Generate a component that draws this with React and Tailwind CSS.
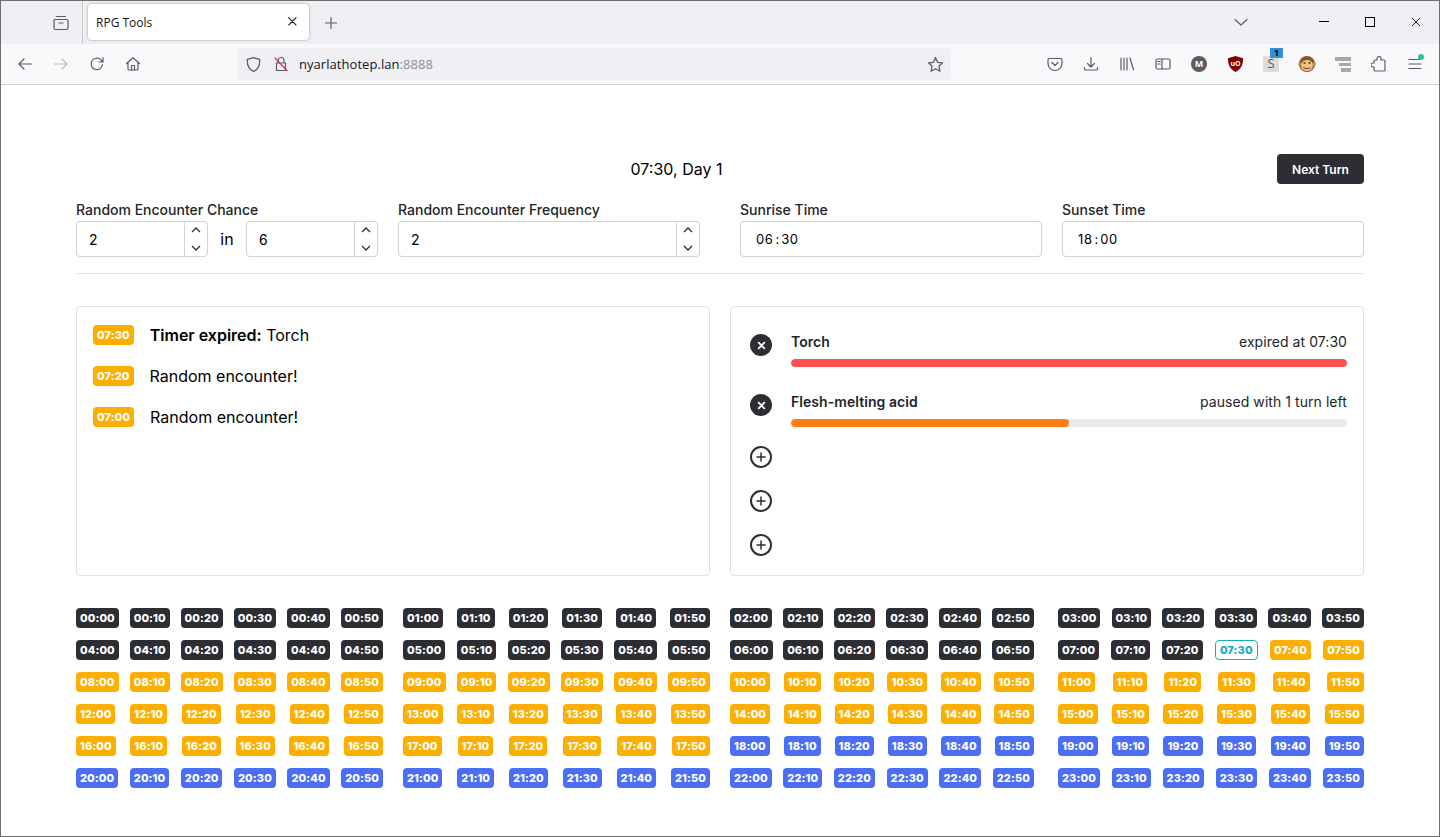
import React from 'react';

const pad = (n) => String(n).padStart(2, '0');

const MINUTES = [0, 10, 20, 30, 40, 50];

function slotType(hour, minute) {
  const t = hour * 60 + minute;
  if (t < 450) return 'past';
  if (t === 450) return 'now';
  if (t < 1080) return 'day';
  return 'night';
}

const badgeStyles = {
  past: 'bg-[#2c2e33] text-white',
  now: 'bg-white text-[#15aabf] border border-[#15aabf]',
  day: 'bg-[#fcaf00] text-white',
  night: 'bg-[#4c6ef5] text-white',
};

function Badge({ type, children }) {
  return (
    <span className={`inline-flex h-5 items-center justify-center rounded px-1 text-[11px] font-extrabold leading-none tracking-[0.1px] ${badgeStyles[type]}`}>
      {children}
    </span>
  );
}

function HourBlock({ hours, className }) {
  return (
    <div className={`flex flex-col gap-3 ${className}`}>
      {hours.map((h) => (
        <div key={h} className="flex justify-between">
          {MINUTES.map((m) => (
            <Badge key={m} type={slotType(h, m)}>{pad(h)}:{pad(m)}</Badge>
          ))}
        </div>
      ))}
    </div>
  );
}

function Ico({ size = 16, className = '', children, fill = 'none' }) {
  return (
    <svg width={size} height={size} viewBox="0 0 16 16" fill={fill} stroke="currentColor" strokeWidth="1.2" strokeLinecap="round" strokeLinejoin="round" className={className}>
      {children}
    </svg>
  );
}

function ToolBtn({ children, className = '' }) {
  return <div className={`flex h-4 w-9 shrink-0 items-center justify-center text-[#5b5b66] ${className}`}>{children}</div>;
}

function BrowserChrome() {
  return (
    <div className="shrink-0 font-['Open_Sans',sans-serif]">
      <div className="flex h-[43px] bg-[#f0f0f4]">
        <div className="flex w-[82px] items-center justify-end border-r border-[#c9c9cf] pr-[13px] text-[#5b5b66]">
          <Ico>
            <path d="M3.500 1.500h9M1 5.500a1 1 0 0 1 1-1h12a1 1 0 0 1 1 1v7.500a1.500 1.500 0 0 1-1.500 1.500h-11A1.500 1.500 0 0 1 1 13z" />
            <path d="M6 8h4" />
          </Ico>
        </div>
        <div className="ml-[5px] mt-[3px] flex h-9 w-[221px] items-center justify-between rounded bg-white pl-2 pr-[9px] shadow-[0_0_3px_rgba(0,0,0,0.35)]">
          <span className="pt-px text-[12px] text-[#15141a]">RPG Tools</span>
          <Ico size={14} className="text-[#15141a]"><path d="M3 3l8.500 8.500M11.500 3L3 11.500" /></Ico>
        </div>
        <div className="ml-[14px] flex items-center text-[#5b5b66]">
          <Ico size={16}><path d="M8 2.500v11M2.500 8h11" /></Ico>
        </div>
        <div className="flex flex-1 items-center justify-end">
          <Ico size={16} className="mr-[70px] -mt-[2px] text-[#5b5b66]"><path d="M2 5.500l6 5.500 6-5.500" /></Ico>
          <div className="mr-[36px] -mt-[2px] h-px w-[10px] bg-black" />
          <div className="mr-[35px] -mt-[2px] h-[10px] w-[10px] border border-black" />
          <Ico size={12} className="mr-[17px] -mt-[2px] text-black"><path d="M3 3l10 10M13 3L3 13" /></Ico>
        </div>
      </div>

      <div className="flex h-[41px] items-center border-b border-[#cfcfd8] bg-[#f9f9fb]">
        <ToolBtn className="ml-[6px]"><Ico><path d="M14.500 8H2M7 3L2 8l5 5" /></Ico></ToolBtn>
        <ToolBtn className="text-[#b8b8c0]"><Ico><path d="M1.500 8H14M9 3l5 5-5 5" /></Ico></ToolBtn>
        <ToolBtn><Ico><path d="M13.500 8.500A5.700 5.700 0 1 1 11.600 3.600L14 6M14 1.500V6H9.800" /></Ico></ToolBtn>
        <ToolBtn><Ico><path d="M1.500 7.500L8 1.800l6.500 5.700M3 6.500V13a1 1 0 0 0 1 1h8a1 1 0 0 0 1-1V6.500" /><path d="M6.500 14V9.500h3V14" /></Ico></ToolBtn>
        <div className="ml-[86px] flex h-8 w-[714px] items-center rounded bg-[#f0f0f4] text-[#5b5b66]">
          <Ico size={17} className="ml-2"><path d="M8 1.500l5.800 1.700c.3 5.500-1.500 9.500-5.800 11.300C3.700 12.700 1.900 8.700 2.200 3.200z" /></Ico>
          <div className="ml-[11px] w-[18px]">
            <Ico>
              <path d="M5 7V4.500a3 3 0 0 1 6 0V7M3.500 7h9v7.500h-9z" />
              <path d="M2 2l12 12.500" stroke="#e22850" />
            </Ico>
          </div>
          <span className="ml-[8px] pt-px text-[13px] tracking-[0.05px] text-[#15141a]">nyarlathotep.lan<span className="text-[#8f8f9d]">:8888</span></span>
          <Ico size={17} className="ml-auto mr-[7px]"><path d="M8 1.500l2 4.400 4.700.5-3.500 3.200 1 4.700L8 12l-4.200 2.300 1-4.700L1.300 6.400 6 5.900z" /></Ico>
        </div>
        <div className="ml-[86px] flex items-center">
          <ToolBtn><Ico><path d="M2.500 2.500h11A1.500 1.500 0 0 1 15 4v3.500a7 7 0 0 1-14 0V4a1.500 1.500 0 0 1 1.500-1.500z" /><path d="M5 6.500l3 3 3-3" /></Ico></ToolBtn>
          <ToolBtn><Ico><path d="M8 1.500v9M4.500 7.500L8 11l3.500-3.500M1.500 11.500v1.500a1 1 0 0 0 1 1h11a1 1 0 0 0 1-1v-1.500" /></Ico></ToolBtn>
          <ToolBtn><Ico><path d="M2 2v12M5 2v12M8 2v12M11 2l3.500 12" /></Ico></ToolBtn>
          <ToolBtn><Ico><rect x="1" y="3" width="14" height="10" rx="1.500" /><path d="M7 3v10M2.800 5.500h2.400M2.800 8h2.400" /></Ico></ToolBtn>
          <ToolBtn>
            <span className="flex h-4 w-4 items-center justify-center rounded-full bg-[#5b5b66] text-[9px] font-bold text-white">M</span>
          </ToolBtn>
          <ToolBtn>
            <svg width="15" height="16" viewBox="0 0 15 16">
              <path d="M7.500 0L15 2.200c.2 6.500-2 11-7.500 13.800C2 13.200-.2 8.700 0 2.200z" fill="#800000" />
              <text x="7.500" y="10" textAnchor="middle" fontSize="7" fontWeight="700" fill="#fff">uO</text>
            </svg>
          </ToolBtn>
          <ToolBtn>
            <div className="relative flex h-4 w-4 items-center justify-center bg-[#dcdcdc] text-[13px] text-[#5b5b5b]">
              S
              <span className="absolute -right-1 -top-2 flex h-[10px] w-[13px] items-center justify-center rounded-[1px] bg-[#2f8fd8] text-[9px] font-bold text-black">1</span>
            </div>
          </ToolBtn>
          <ToolBtn>
            <svg width="18" height="18" viewBox="0 0 18 18">
              <circle cx="9" cy="9" r="8" fill="#8a5a22" />
              <circle cx="1.800" cy="9" r="1.800" fill="#c48a4a" />
              <circle cx="16.200" cy="9" r="1.800" fill="#c48a4a" />
              <ellipse cx="9" cy="10.500" rx="6" ry="5.500" fill="#eec28a" />
              <circle cx="6.500" cy="8" r="1.100" fill="#2f5d2a" />
              <circle cx="11.500" cy="8" r="1.100" fill="#2f5d2a" />
              <path d="M5.500 12.500c2 1.500 5 1.500 7 0" stroke="#8a2a1a" fill="none" />
            </svg>
          </ToolBtn>
          <ToolBtn>
            <div className="flex w-4 flex-col items-end gap-[2px]">
              <div className="h-[4px] w-4 bg-[#a8a8a8]" />
              <div className="h-[3px] w-3 bg-[#a8a8a8]" />
              <div className="h-[4px] w-[10px] bg-[#a8a8a8]" />
            </div>
          </ToolBtn>
          <ToolBtn><Ico><path d="M6 2.500a2 2 0 0 1 4 0V4h3a1 1 0 0 1 1 1v9a1 1 0 0 1-1 1H4a1 1 0 0 1-1-1v-3H2a2 2 0 0 1 0-4h1V5a1 1 0 0 1 1-1h2z" /></Ico></ToolBtn>
          <ToolBtn className="relative">
            <Ico><path d="M2 3.500h12M2 8h12M2 12.500h12" /></Ico>
            <span className="absolute right-[9px] -top-[2px] h-[6px] w-[6px] rounded-full bg-[#2ac3a2]" />
          </ToolBtn>
        </div>
      </div>
    </div>
  );
}

function Stepper({ value, className }) {
  return (
    <div className={`flex h-9 items-center rounded border border-[#ced4da] ${className}`}>
      <span className="flex-1 pl-3 pt-px text-[14px] text-black">{value}</span>
      <div className="flex h-full w-[23px] flex-col items-center justify-between border-l border-[#ced4da] py-[5px] text-[#2c2e33]">
        <svg width="10" height="6" viewBox="0 0 10 6" fill="none" stroke="currentColor" strokeWidth="1.300"><path d="M1 5l4-4 4 4" /></svg>
        <svg width="10" height="6" viewBox="0 0 10 6" fill="none" stroke="currentColor" strokeWidth="1.300"><path d="M1 1l4 4 4-4" /></svg>
      </div>
    </div>
  );
}

function Field({ label, children }) {
  return (
    <div className="w-[302px]">
      <div className="mb-px text-[14px] font-medium leading-[20px] text-[#212529]">{label}</div>
      {children}
    </div>
  );
}

function TimeInput({ h, m }) {
  return (
    <div className="flex h-9 items-center rounded border border-[#ced4da] pl-[15px] pt-[2px] text-[13px] text-black">
      <span className="tracking-[0.6px]">{h}</span>
      <span className="mx-[2px]">:</span>
      <span className="tracking-[0.6px]">{m}</span>
    </div>
  );
}

function LogRow({ time, children }) {
  return (
    <div className="flex h-5 items-center gap-4">
      <Badge type="day">{time}</Badge>
      <span className="text-[16px] text-black">{children}</span>
    </div>
  );
}

function TimerRow({ name, status, barClass, pct }) {
  return (
    <div className="flex gap-[19px]">
      <button className="flex h-[22px] w-[22px] shrink-0 items-center justify-center rounded-full bg-[#2c2e33] text-white">
        <svg width="9" height="9" viewBox="0 0 8 8" fill="none" stroke="currentColor" strokeWidth="1.600" strokeLinecap="round"><path d="M1.500 1.500l5 5M6.500 1.500l-5 5" /></svg>
      </button>
      <div className="flex h-[33px] flex-1 flex-col justify-between">
        <div className="flex justify-between text-[14px] leading-4 tracking-[0.06px]">
          <span className="font-semibold text-[#212529]">{name}</span>
          <span className="text-[#212529]">{status}</span>
        </div>
        <div className="h-2 overflow-hidden rounded-full bg-[#e9ecef]">
          <div className={`h-full rounded-full ${barClass}`} style={{ width: `${pct}%` }} />
        </div>
      </div>
    </div>
  );
}

function AddButton() {
  return (
    <button className="flex h-[22px] w-[22px] items-center justify-center rounded-full border-2 border-[#2c2e33] text-[#2c2e33]">
      <svg width="10" height="10" viewBox="0 0 10 10" fill="none" stroke="currentColor" strokeWidth="1.500" strokeLinecap="round"><path d="M5 1v8M1 5h8" /></svg>
    </button>
  );
}

export default function App() {
  return (
    <div className="flex h-[837px] flex-col overflow-hidden border border-[#6e6e6e] bg-white font-['Inter',sans-serif]">
      <BrowserChrome />
      <main className="flex-1 px-[75px] pt-[69px]">
        <div className="flex h-[30px] items-center justify-between">
          <span />
          <span className="text-[16px] text-black">07:30, Day 1</span>
          <button className="h-[30px] w-[87px] rounded bg-[#2c2e33] pt-px text-[12px] font-semibold text-white">Next Turn</button>
        </div>

        <div className="mt-4 flex justify-between">
          <div className="flex w-[624px] justify-between">
            <Field label="Random Encounter Chance">
              <div className="flex items-center justify-between">
                <Stepper value="2" className="w-[132px]" />
                <span className="text-[16px] text-black">in</span>
                <Stepper value="6" className="w-[132px]" />
              </div>
            </Field>
            <Field label="Random Encounter Frequency">
              <Stepper value="2" className="w-full" />
            </Field>
          </div>
          <div className="flex w-[624px] justify-between">
            <Field label="Sunrise Time"><TimeInput h="06" m="30" /></Field>
            <Field label="Sunset Time"><TimeInput h="18" m="00" /></Field>
          </div>
        </div>

        <div className="mt-4 border-t border-[#dee2e6]" />

        <div className="mt-8 grid grid-cols-2 gap-5">
          <div className="flex h-[270px] flex-col gap-[21px] rounded border border-[#dee2e6] px-4 pt-[18px]">
            <LogRow time="07:30"><b className="font-semibold">Timer expired:</b> Torch</LogRow>
            <LogRow time="07:20">Random encounter!</LogRow>
            <LogRow time="07:00">Random encounter!</LogRow>
          </div>
          <div className="flex h-[270px] flex-col rounded border border-[#dee2e6] pl-[19px] pr-4 pt-[27px]">
            <div className="flex flex-col gap-[27px]">
              <TimerRow name="Torch" status="expired at 07:30" barClass="bg-[#fa5252]" pct={100} />
              <TimerRow name="Flesh-melting acid" status="paused with 1 turn left" barClass="bg-[#fd7e14]" pct={50} />
            </div>
            <div className="mt-[19px] flex flex-col gap-[22px]">
              <AddButton />
              <AddButton />
              <AddButton />
            </div>
          </div>
        </div>

        <div className="mt-8 grid grid-cols-2 gap-5">
          <div className="flex justify-between">
            <HourBlock hours={[0, 4, 8, 12, 16, 20]} className="w-[307px]" />
            <HourBlock hours={[1, 5, 9, 13, 17, 21]} className="w-[307px]" />
          </div>
          <div className="flex justify-between">
            <HourBlock hours={[2, 6, 10, 14, 18, 22]} className="w-[304px]" />
            <HourBlock hours={[3, 7, 11, 15, 19, 23]} className="w-[306px]" />
          </div>
        </div>
      </main>
    </div>
  );
}
